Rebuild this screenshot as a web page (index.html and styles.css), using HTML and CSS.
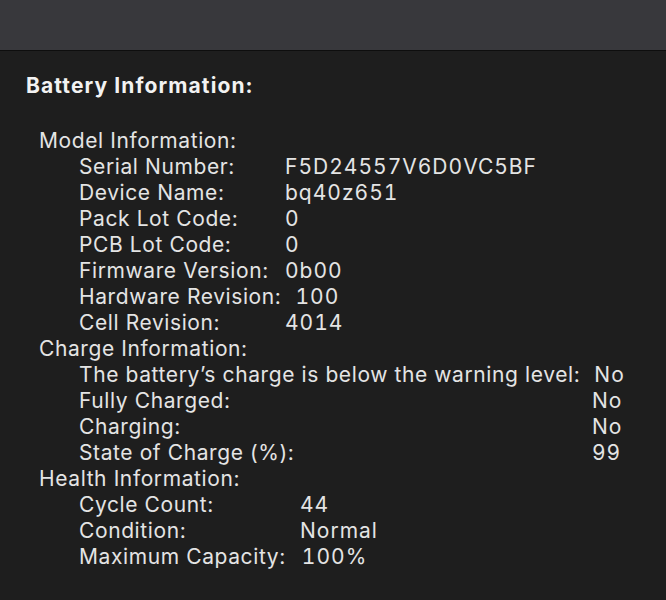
FILE: index.html
```html
<!DOCTYPE html>
<html lang="en">

<head>
    <meta charset="UTF-8">
    <meta name="viewport" content="width=device-width, initial-scale=1.0">
    <title>Battery Information</title>
    <link rel="stylesheet" href="styles.css">
</head>

<body>

    <div class="toolbar"></div>

    <div class="content">
        <h1>Battery Information:</h1>

        <div class="section">
            <div class="section-title">Model Information:</div>
            <div class="rows model">
                <div class="row"><span class="label">Serial Number:</span><span class="value">F5D24557V6D0VC5BF</span></div>
                <div class="row"><span class="label">Device Name:</span><span class="value">bq40z651</span></div>
                <div class="row"><span class="label">Pack Lot Code:</span><span class="value">0</span></div>
                <div class="row"><span class="label">PCB Lot Code:</span><span class="value">0</span></div>
                <div class="row"><span class="label">Firmware Version:</span><span class="value">0b00</span></div>
                <div class="row"><span class="label">Hardware Revision:</span><span class="value">100</span></div>
                <div class="row"><span class="label">Cell Revision:</span><span class="value">4014</span></div>
            </div>
        </div>

        <div class="section">
            <div class="section-title">Charge Information:</div>
            <div class="rows charge">
                <div class="row"><span class="label">The battery’s charge is below the warning level:</span><span class="value">No</span></div>
                <div class="row"><span class="label">Fully Charged:</span><span class="value">No</span></div>
                <div class="row"><span class="label">Charging:</span><span class="value">No</span></div>
                <div class="row"><span class="label">State of Charge (%):</span><span class="value">99</span></div>
            </div>
        </div>

        <div class="section">
            <div class="section-title">Health Information:</div>
            <div class="rows health">
                <div class="row"><span class="label">Cycle Count:</span><span class="value">44</span></div>
                <div class="row"><span class="label">Condition:</span><span class="value">Normal</span></div>
                <div class="row"><span class="label">Maximum Capacity:</span><span class="value">100%</span></div>
            </div>
        </div>
    </div>

</body>

</html>
```

FILE: styles.css
```css
* {
    margin: 0;
    padding: 0;
    box-sizing: border-box;
}

body {
    font-family: 'Inter', 'Liberation Sans', sans-serif;
    background-color: #1e1e1e;
    color: #e4e4e4;
    height: 600px;
    overflow: hidden;
}

.toolbar {
    height: 51px;
    background-color: #38383c;
    border-bottom: 1px solid #0e0e0e;
}

.content {
    padding: 20px 26px 0;
}

h1 {
    font-size: 21px;
    font-weight: 700;
    letter-spacing: 1.1px;
    line-height: 30px;
    color: #f2f2f2;
    margin-bottom: 27px;
}

.section {
    padding-left: 13px;
}

.section-title,
.row {
    font-size: 21px;
    letter-spacing: 0.6px;
    line-height: 26px;
}

.rows {
    padding-left: 40px;
}

.row {
    display: flex;
}

.value {
    font-variant-numeric: tabular-nums;
    letter-spacing: 1px;
}

.model .label {
    min-width: 192px;
    margin-right: 14px;
}

.charge .label {
    min-width: 499px;
    margin-right: 14px;
}

.health .label {
    min-width: 205px;
    margin-right: 16px;
}
```
